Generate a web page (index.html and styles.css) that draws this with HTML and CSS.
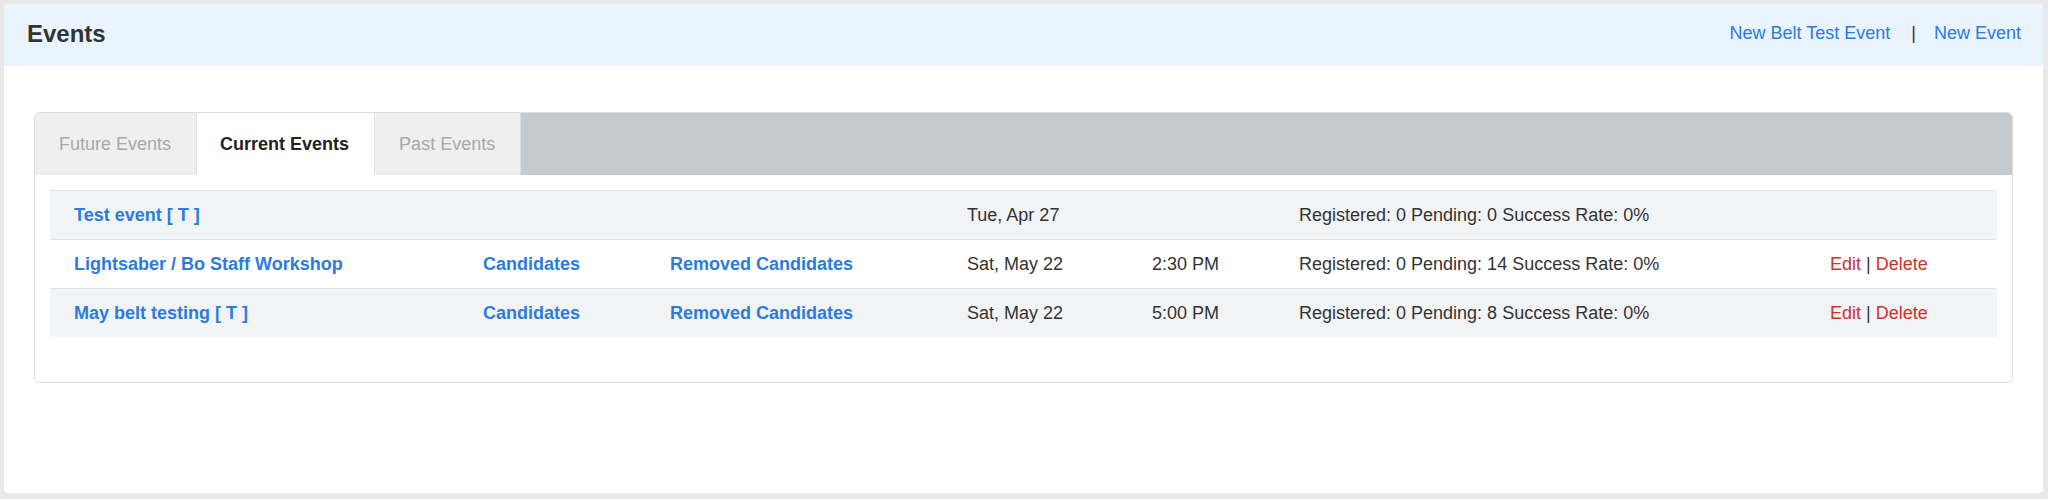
FILE: index.html
```html
<!DOCTYPE html>
<html>
<head>
<meta charset="utf-8">
<title>Events</title>
<link rel="stylesheet" href="styles.css">
</head>
<body>
<div class="card">
  <div class="header">
    <h1 class="title">Events</h1>
    <div class="actions">
      <a class="hlink" href="#">New Belt Test Event</a>
      <span class="sep">|</span>
      <a class="hlink" href="#">New Event</a>
    </div>
  </div>
  <div class="panel">
    <div class="tabbar">
      <div class="tab">Future Events</div>
      <div class="tab active">Current Events</div>
      <div class="tab">Past Events</div>
    </div>
    <div class="rows">
      <div class="row odd">
        <div class="cell"><a class="link" href="#">Test event [ T ]</a></div>
        <div class="cell"></div>
        <div class="cell"></div>
        <div class="cell">Tue, Apr 27</div>
        <div class="cell"></div>
        <div class="cell">Registered: 0 Pending: 0 Success Rate: 0%</div>
        <div class="cell"></div>
      </div>
      <div class="row">
        <div class="cell"><a class="link" href="#">Lightsaber / Bo Staff Workshop</a></div>
        <div class="cell"><a class="link" href="#">Candidates</a></div>
        <div class="cell"><a class="link" href="#">Removed Candidates</a></div>
        <div class="cell">Sat, May 22</div>
        <div class="cell">2:30 PM</div>
        <div class="cell">Registered: 0 Pending: 14 Success Rate: 0%</div>
        <div class="cell"><a class="red" href="#">Edit</a> | <a class="red" href="#">Delete</a></div>
      </div>
      <div class="row odd">
        <div class="cell"><a class="link" href="#">May belt testing [ T ]</a></div>
        <div class="cell"><a class="link" href="#">Candidates</a></div>
        <div class="cell"><a class="link" href="#">Removed Candidates</a></div>
        <div class="cell">Sat, May 22</div>
        <div class="cell">5:00 PM</div>
        <div class="cell">Registered: 0 Pending: 8 Success Rate: 0%</div>
        <div class="cell"><a class="red" href="#">Edit</a> | <a class="red" href="#">Delete</a></div>
      </div>
    </div>
  </div>
</div>
</body>
</html>
```

FILE: styles.css
```css
html, body {
  margin: 0;
  padding: 0;
}
body {
  background: #e9e9e9;
  font-family: "Liberation Sans", Arial, Helvetica, sans-serif;
  color: #333;
  padding: 4px 5px 6px 4px;
}
.card {
  background: #fff;
  border-radius: 4px;
  height: 489px;
  overflow: hidden;
}
.header {
  background: #eaf4fe;
  height: 62px;
  display: flex;
  align-items: center;
  justify-content: space-between;
  padding: 0 22px 0 23px;
}
.title {
  margin: 0;
  font-size: 24px;
  font-weight: bold;
  color: #333;
  position: relative;
  top: -1px;
}
.actions {
  display: flex;
  align-items: center;
  font-size: 18px;
  position: relative;
  top: -2px;
}
.hlink {
  color: #2b7bdc;
  text-decoration: none;
}
.sep {
  color: #333;
  margin: 0 18px 0 21px;
}
.panel {
  margin: 46px 30px 0 30px;
  border: 1px solid #dcdcdc;
  border-radius: 6px;
  height: 271px;
  box-sizing: border-box;
  padding: 0 15px;
  overflow: hidden;
}
.tabbar {
  display: flex;
  background: #c4cbcf;
  height: 62px;
  margin: 0 -15px;
}
.tab {
  display: flex;
  align-items: center;
  font-size: 18px;
  color: #a8a8a8;
  background: #efefef;
  padding: 0 25px 0 24px;
  border-right: 1px solid #dedede;
}
.tab.active {
  background: #fff;
  color: #222;
  font-weight: bold;
  padding: 0 25px 0 23px;
  border-right: 1px solid #e4e4e4;
}
.rows {
  margin-top: 15px;
  border-top: 1px solid #e3e5e8;
}
.row {
  display: grid;
  grid-template-columns: 409px 187px 297px 185px 147px 531px 1fr;
  height: 48px;
  align-items: center;
  border-bottom: 1px solid #e3e5e8;
  font-size: 18px;
  color: #333;
}
.row:last-child {
  border-bottom: none;
}
.row.odd {
  background: #f2f3f5;
}
.cell {
  padding-left: 24px;
  white-space: nowrap;
}
.link {
  color: #2b7bdc;
  font-weight: bold;
  text-decoration: none;
}
.red {
  color: #d2302c;
  text-decoration: none;
}
```
